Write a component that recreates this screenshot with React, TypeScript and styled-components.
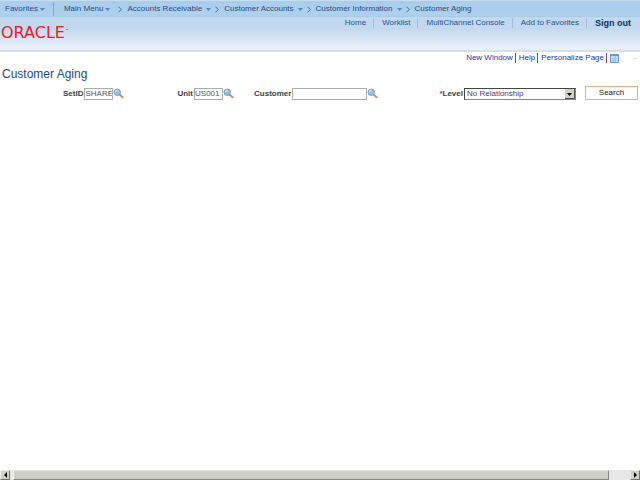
import React from 'react';
import styled, { createGlobalStyle } from 'styled-components';

const Global = createGlobalStyle`
  * { box-sizing: border-box; }
  body { margin: 0; background: #fff; font-family: "Liberation Sans", Arial, sans-serif; font-size: 8px; line-height: 10px; color: #333; }
  button, input, select { font: inherit; margin: 0; padding: 0; border-radius: 0; }
  a { text-decoration: none; }
`;

const Page = styled.div`
  min-height: 100vh;
  display: flex;
  flex-direction: column;
`;
const Header = styled.header`
  height: 52px;
  background: linear-gradient(#c0d8ef 0, #c2d8ef 28px, #cfe0f1 34px, #dce8f5 42px, #e8f1f8 46px, #e8f1f8 50px);
  border-bottom: 2px solid #d8dfe8;
`;
const Crumbs = styled.nav`
  height: 17px;
  display: flex;
  align-items: center;
  padding: 1px 0 0 5px;
  border-top: 1px solid #c6dff0;
  border-bottom: 1px solid #a9cce6;
  background: linear-gradient(#a9cdee, #aed0ec);
`;
const Crumb = styled.button<{ $gap?: number }>`
  display: flex;
  align-items: center;
  gap: ${p => p.$gap ?? 2}px;
  border: 0;
  background: none;
  color: #2b4a7c;
  white-space: nowrap;
`;
const CrumbRule = styled.span`
  width: 1px;
  height: 14px;
  margin: 0 10px 0 8px;
  background: #7fa9d0;
`;
const CrumbLink = styled.a`
  color: #2b4a7c;
  white-space: nowrap;
`;
const Separator = styled.svg<{ $wide?: boolean }>`
  width: 4px;
  height: 7px;
  flex: none;
  margin: 0 5px 0 ${p => (p.$wide ? 8 : 4)}px;
`;
const Masthead = styled.div`
  display: flex;
  justify-content: space-between;
  align-items: flex-start;
  padding: 0 9px 0 1px;
`;
const Logo = styled.a`
  display: flex;
  align-items: flex-start;
  margin-top: 8px;
  color: #f01823;
  font-family: "DejaVu Sans", sans-serif;
  font-size: 16px;
  line-height: 16px;
`;
const Trademark = styled.span`
  width: 2px;
  height: 1px;
  margin: 4px 0 0 1px;
  background: #f05a66;
`;
const UserLinks = styled.nav`
  display: flex;
  align-items: center;
  height: 10px;
  margin-top: 1px;
`;
const UserLink = styled.a<{ $strong?: boolean }>`
  color: ${p => (p.$strong ? '#003068' : '#2450a0')};
  font-weight: ${p => (p.$strong ? 700 : 400)};
  font-size: ${p => (p.$strong ? 9 : 8)}px;
  & + & {
    margin-left: 7px;
    padding-left: 8px;
    border-left: 1px solid #a9bdd0;
  }
`;
const PageLinks = styled.nav`
  display: flex;
  align-items: center;
  justify-content: flex-end;
  gap: 3px;
  padding: 1px 3px 0 0;
`;
const PageLink = styled.a`
  color: #1c3a98;
  padding-right: 2px;
  border-right: 1px solid #82408c;
`;
const GridButton = styled.button`
  width: 9px;
  height: 9px;
  margin-right: 11px;
  border: 0;
  background: none;
  display: flex;
`;
const Corner = styled.span`
  width: 4px;
  height: 1px;
  background: #ddd;
`;
const Title = styled.h1`
  margin: 4px 0 5px 2px;
  font-size: 12px;
  line-height: 14px;
  font-weight: 400;
  color: #214a80;
`;
const Form = styled.form`
  display: flex;
  align-items: center;
  padding: 0 2px 0 63px;
`;
const Field = styled.div<{ $gap?: number; $end?: boolean }>`
  display: flex;
  align-items: center;
  margin-left: ${p => (p.$end ? 'auto' : `${p.$gap ?? 0}px`)};
`;
const Label = styled.label`
  font-weight: 700;
  color: #404040;
  margin-right: 1px;
  white-space: nowrap;
`;
const Required = styled.span`
  color: #c03020;
`;
const TextBox = styled.input<{ $width: number }>`
  width: ${p => p.$width}px;
  height: 12px;
  border: 1px solid #adadad;
  background: #fff;
  color: #5c5068;
  outline: none;
`;
const LookupButton = styled.button`
  width: 11px;
  height: 11px;
  border: 0;
  background: none;
  display: flex;
`;
const SelectBox = styled.div`
  display: flex;
  align-items: center;
  width: 112px;
  height: 12px;
  border: 1px solid;
  border-color: #444 #888 #888 #444;
  position: relative;
  background: #fff;
`;
const Select = styled.select`
  appearance: none;
  width: 100%;
  height: 10px;
  padding-left: 2px;
  border: 0;
  background: none;
  color: #51386b;
  outline: none;
`;
const SelectArrow = styled.svg`
  position: absolute;
  right: 0;
  top: 0;
  width: 10px;
  height: 10px;
  pointer-events: none;
`;
const SearchButton = styled.button`
  width: 53px;
  height: 14px;
  margin: 0 0 1px 9px;
  border: 1px solid #e2b082;
  background: #fff;
  color: #222;
`;
const ScrollStrip = styled.footer`
  display: flex;
  height: 10px;
  margin-top: auto;
  background: #e9e7e3;
`;
const ScrollButton = styled.button`
  width: 10px;
  height: 10px;
  border: 1px solid;
  border-color: #eeeae6 #77716e #77716e #eeeae6;
  background: #d4d0c8;
  display: flex;
  align-items: center;
  justify-content: center;
`;
const ScrollTrack = styled.div`
  flex: 1;
  padding: 0 21px 0 3px;
`;
const ScrollThumb = styled.div`
  height: 10px;
  border: 1px solid;
  border-color: #e4e0da #8a8580 #8a8580 #f4f2f0;
  background: #d0cec6;
`;

const Caret = () => (
  <svg width="5" height="3" viewBox="0 0 5 3"><path d="M0 0h5L2.5 3z" fill="#5288bc" /></svg>
);

const Chevron = ({ wide }: { wide?: boolean }) => (
  <Separator $wide={wide} viewBox="0 0 4 7"><path d="M.5.7 3.3 3.5.5 6.3" fill="none" stroke="#3f6f9e" /></Separator>
);

const Lookup = ({ name }: { name: string }) => (
  <LookupButton type="button" aria-label={`Look up ${name}`}>
    <svg width="11" height="11" viewBox="0 0 11 11">
      <path d="m6.6 6.6 3 2.7" stroke="#d28a58" strokeWidth="2" strokeLinecap="round" />
      <circle cx="4.2" cy="4.2" r="3.2" fill="#8fc4ee" stroke="#8196b0" />
      <path d="M2.3 4.2A2 2 0 0 1 4.6 2.2" fill="none" stroke="#e2f3ff" />
    </svg>
  </LookupButton>
);

const menus = ['Accounts Receivable', 'Customer Accounts', 'Customer Information'];

export default function App() {
  return (
    <Page>
      <Global />
      <Header>
        <Crumbs aria-label="Breadcrumb">
          <Crumb>Favorites<Caret /></Crumb>
          <CrumbRule />
          <Crumb>Main Menu<Caret /></Crumb>
          {menus.map((menu, i) => (
            <React.Fragment key={menu}>
              <Chevron wide={i === 0} />
              <Crumb $gap={4}>{menu}<Caret /></Crumb>
            </React.Fragment>
          ))}
          <Chevron />
          <CrumbLink href="#">Customer Aging</CrumbLink>
        </Crumbs>
        <Masthead>
          <Logo href="#">ORACLE<Trademark /></Logo>
          <UserLinks>
            <UserLink href="#">Home</UserLink>
            <UserLink href="#">Worklist</UserLink>
            <UserLink href="#">MultiChannel Console</UserLink>
            <UserLink href="#">Add to Favorites</UserLink>
            <UserLink href="#" $strong>Sign out</UserLink>
          </UserLinks>
        </Masthead>
      </Header>
      <main>
        <PageLinks>
          <PageLink href="#">New Window</PageLink>
          <PageLink href="#">Help</PageLink>
          <PageLink href="#">Personalize Page</PageLink>
          <GridButton aria-label="Page grid">
            <svg width="9" height="9" viewBox="0 0 9 9">
              <path d="M.5.5h8v8h-8z" fill="#c5daf5" stroke="#6b97d2" />
              <path d="M1 1h7v1H1z" fill="#6f9ad6" />
              <path d="M1 4.5h4M1 6.5h4M5.5 2v6" stroke="#a3c2ea" />
            </svg>
          </GridButton>
          <Corner />
        </PageLinks>
        <Title>Customer Aging</Title>
        <Form onSubmit={e => e.preventDefault()}>
          <Field>
            <Label htmlFor="setid">SetID</Label>
            <TextBox id="setid" $width={29} defaultValue="SHARE" />
            <Lookup name="SetID" />
          </Field>
          <Field $gap={53}>
            <Label htmlFor="unit">Unit</Label>
            <TextBox id="unit" $width={29} defaultValue="US001" />
            <Lookup name="Unit" />
          </Field>
          <Field $gap={20}>
            <Label htmlFor="customer">Customer</Label>
            <TextBox id="customer" $width={75} />
            <Lookup name="Customer" />
          </Field>
          <Field $end>
            <Label htmlFor="level"><Required>*</Required>Level</Label>
            <SelectBox>
              <Select id="level"><option>No Relationship</option></Select>
              <SelectArrow viewBox="0 0 10 10">
                <path d="M0 0h10v10H0z" fill="#d4d0c8" />
                <path d="M9.5 0v9.5H0" fill="none" stroke="#55504c" />
                <path d="M2 4h5L4.5 7z" fill="#000" />
              </SelectArrow>
            </SelectBox>
          </Field>
          <SearchButton type="submit">Search</SearchButton>
        </Form>
      </main>
      <ScrollStrip>
        <ScrollButton aria-label="Scroll left"><svg width="3" height="6" viewBox="0 0 3 6"><path d="M3 0v6L0 3z" /></svg></ScrollButton>
        <ScrollTrack><ScrollThumb /></ScrollTrack>
        <ScrollButton aria-label="Scroll right"><svg width="3" height="6" viewBox="0 0 3 6"><path d="M0 0v6l3-3z" /></svg></ScrollButton>
      </ScrollStrip>
    </Page>
  );
}
